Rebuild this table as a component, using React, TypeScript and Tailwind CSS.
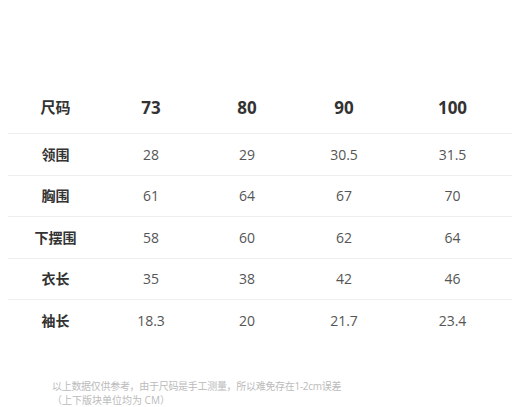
import React from "react";

const sizes = ["73", "80", "90", "100"];
const rows: [string, string[]][] = [
  ["领围", ["28", "29", "30.5", "31.5"]],
  ["胸围", ["61", "64", "67", "70"]],
  ["下摆围", ["58", "60", "62", "64"]],
  ["衣长", ["35", "38", "42", "46"]],
  ["袖长", ["18.3", "20", "21.7", "23.4"]],
];

const grid = "grid grid-cols-[95px_96px_96px_98px_119px] items-center";
const font = { fontFamily: '"Open Sans", "Noto Sans CJK SC", sans-serif' };

export default function App() {
  return (
    <div className="w-[520px] h-[407px] bg-white overflow-hidden" style={font}>
      <div className="pt-[82px] px-[8px]">
        <div className={`${grid} h-[51px]`}>
          <div className="text-center text-[15px] font-bold text-[#333]">尺码</div>
          {sizes.map((s) => (
            <div key={s} className="text-center text-[17px] font-bold text-[#333]">
              {s}
            </div>
          ))}
        </div>
        {rows.map(([label, vals]) => (
          <div key={label} className={`${grid} h-[41.5px] border-t border-[#eeeeee]`}>
            <div className="text-center text-[14px] font-bold text-[#333]">{label}</div>
            {vals.map((v, i) => (
              <div key={i} className="text-center text-[14px] text-[#555]">
                {v}
              </div>
            ))}
          </div>
        ))}
      </div>
      <div className="pl-[52px] pt-[38px] text-[10px] leading-[14px] text-[#bbbbbb]">
        <div className="tracking-[-0.3px]">以上数据仅供参考，由于尺码是手工测量，所以难免存在1-2cm误差</div>
        <div>（上下版块单位均为 CM）</div>
      </div>
    </div>
  );
}
